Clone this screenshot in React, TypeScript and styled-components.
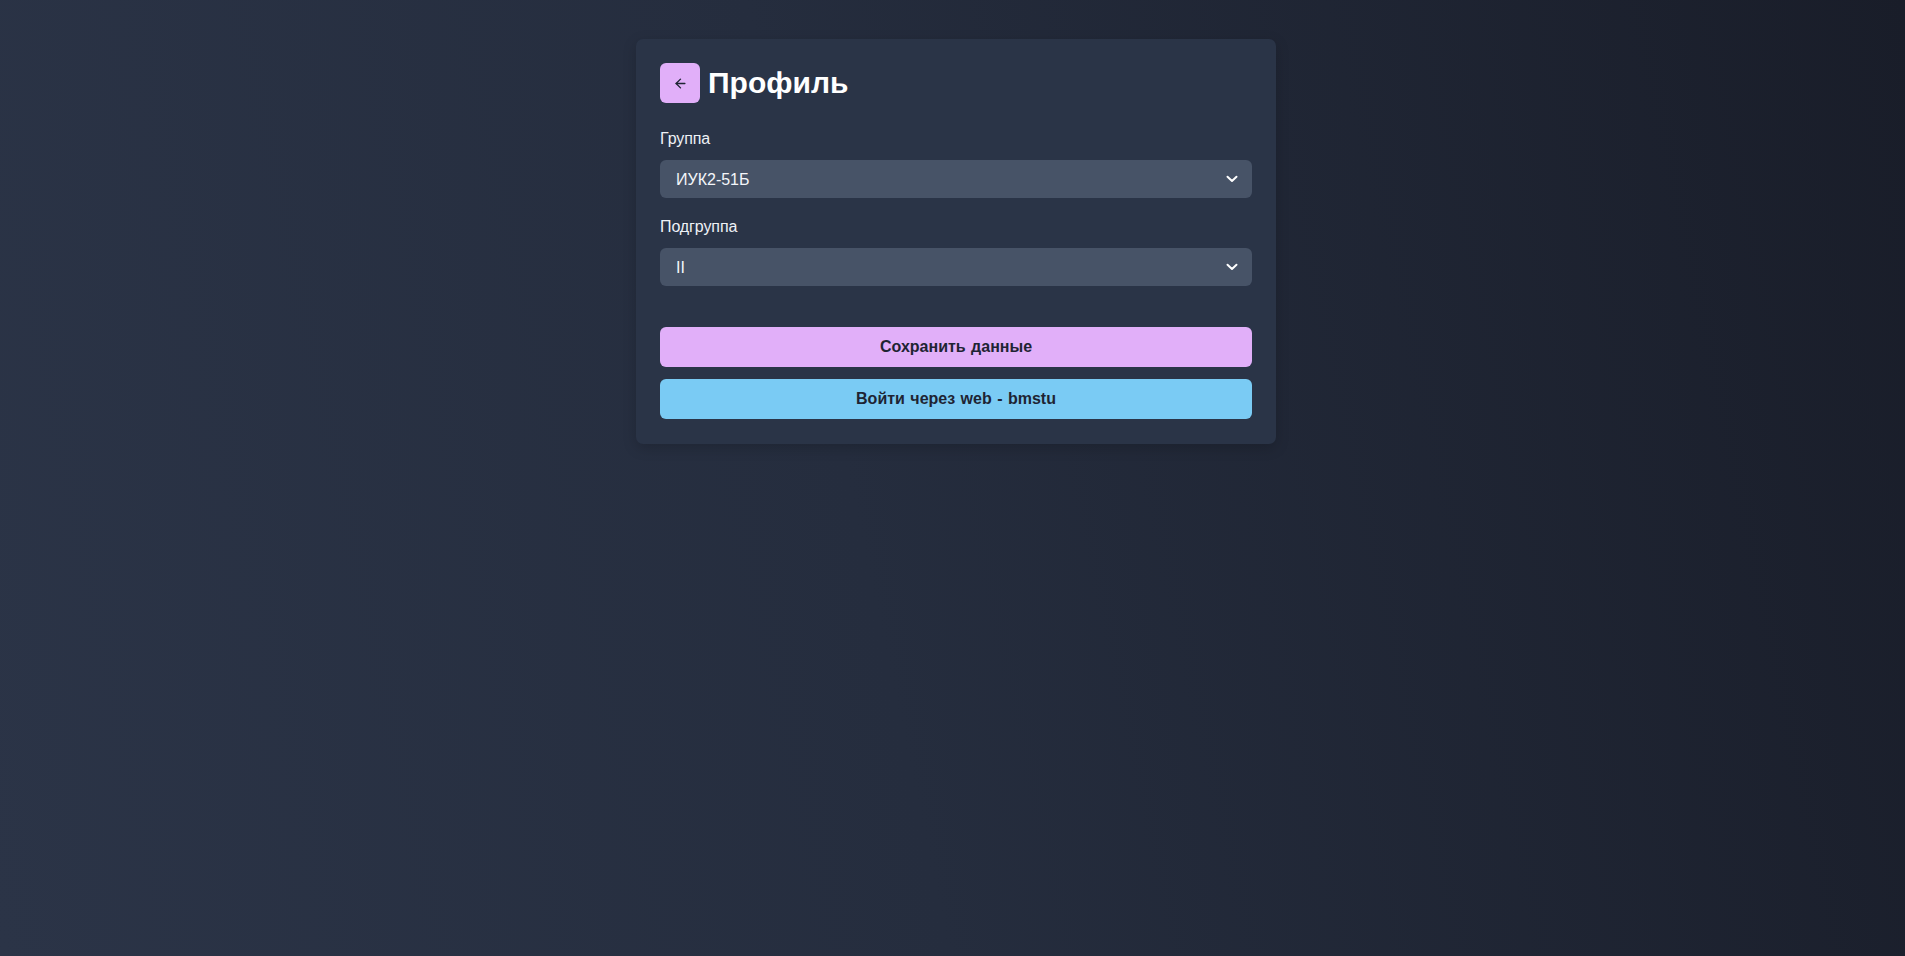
import React, { useState } from "react";
import styled, { createGlobalStyle } from "styled-components";

const GlobalStyle = createGlobalStyle`
  html, body {
    margin: 0;
    padding: 0;
    min-height: 100%;
  }
  body {
    font-family: "Liberation Sans", Arial, sans-serif;
    background: linear-gradient(78deg, #2b3447 0%, #252d3e 45%, #191d29 100%);
    min-height: 956px;
    color: #ffffff;
  }
  * { box-sizing: border-box; }
`;

const Page = styled.main`
  min-height: 956px;
  display: flex;
  justify-content: center;
  align-items: flex-start;
  padding: 39px 0 0 7px;
`;

const Card = styled.section`
  width: 640px;
  background: #2a3447;
  border-radius: 7px;
  padding: 24px 24px 25px;
  box-shadow: 0 4px 14px rgba(0, 0, 0, 0.18);
  display: flex;
  flex-direction: column;
`;

const Header = styled.header`
  display: flex;
  align-items: center;
  gap: 8px;
  margin-bottom: 24px;
`;

const BackButton = styled.button`
  width: 40px;
  height: 40px;
  border: none;
  border-radius: 6px;
  background: #e1aff9;
  color: #1e2433;
  display: flex;
  align-items: center;
  justify-content: center;
  padding: 0;
  cursor: pointer;
`;

const Title = styled.h1`
  margin: 0;
  font-size: 30px;
  font-weight: 700;
  line-height: 36px;
  color: #ffffff;
`;

const Form = styled.div`
  display: flex;
  flex-direction: column;
  gap: 17px;
`;

const Field = styled.label`
  display: flex;
  flex-direction: column;
  gap: 9px;
`;

const LabelText = styled.span`
  font-size: 16px;
  line-height: 24px;
  color: #eef1f6;
  letter-spacing: -0.1px;
`;

const SelectWrap = styled.div`
  position: relative;
  height: 38px;
`;

const Select = styled.select`
  appearance: none;
  -webkit-appearance: none;
  width: 100%;
  height: 38px;
  border: none;
  border-radius: 6px;
  background: #475367;
  color: #f4f6fa;
  font-family: "Liberation Sans", Arial, sans-serif;
  font-size: 16px;
  padding: 0 40px 0 16px;
  outline: none;
  cursor: pointer;
`;

const Chevron = styled.svg`
  position: absolute;
  right: 14px;
  top: 50%;
  transform: translateY(-50%);
  pointer-events: none;
`;

const Actions = styled.div`
  display: flex;
  flex-direction: column;
  gap: 12px;
  margin-top: 41px;
`;

const ActionButton = styled.button<{ $tone: "pink" | "blue" }>`
  height: 40px;
  width: 100%;
  border: none;
  border-radius: 6px;
  background: ${(p) => (p.$tone === "pink" ? "#e1aff9" : "#7acbf4")};
  color: #1e2433;
  font-family: "Liberation Sans", Arial, sans-serif;
  font-size: 16px;
  font-weight: 700;
  word-spacing: 1px;
  cursor: pointer;
`;

const ChevronIcon = () => (
  <Chevron width="12" height="8" viewBox="0 0 12 8" fill="none">
    <path d="M1.5 1.8 L6 6 L10.5 1.8" stroke="#ffffff" strokeWidth="2" strokeLinecap="round" strokeLinejoin="round" />
  </Chevron>
);

const ArrowLeft = () => (
  <svg width="15" height="15" viewBox="0 0 24 24" fill="none" stroke="currentColor" strokeWidth="2.2" strokeLinecap="round" strokeLinejoin="round">
    <path d="M19 12H5" />
    <path d="M12 19l-7-7 7-7" />
  </svg>
);

export default function App() {
  const [group, setGroup] = useState("ИУК2-51Б");
  const [sub, setSub] = useState("II");
  return (
    <>
      <GlobalStyle />
      <Page>
        <Card>
          <Header>
            <BackButton aria-label="Назад">
              <ArrowLeft />
            </BackButton>
            <Title>Профиль</Title>
          </Header>
          <Form>
            <Field>
              <LabelText>Группа</LabelText>
              <SelectWrap>
                <Select value={group} onChange={(e) => setGroup(e.target.value)}>
                  <option>ИУК2-51Б</option>
                  <option>ИУК2-52Б</option>
                  <option>ИУК4-51Б</option>
                </Select>
                <ChevronIcon />
              </SelectWrap>
            </Field>
            <Field>
              <LabelText>Подгруппа</LabelText>
              <SelectWrap>
                <Select value={sub} onChange={(e) => setSub(e.target.value)}>
                  <option>I</option>
                  <option>II</option>
                </Select>
                <ChevronIcon />
              </SelectWrap>
            </Field>
          </Form>
          <Actions>
            <ActionButton $tone="pink">Сохранить данные</ActionButton>
            <ActionButton $tone="blue">Войти через web - bmstu</ActionButton>
          </Actions>
        </Card>
      </Page>
    </>
  );
}
